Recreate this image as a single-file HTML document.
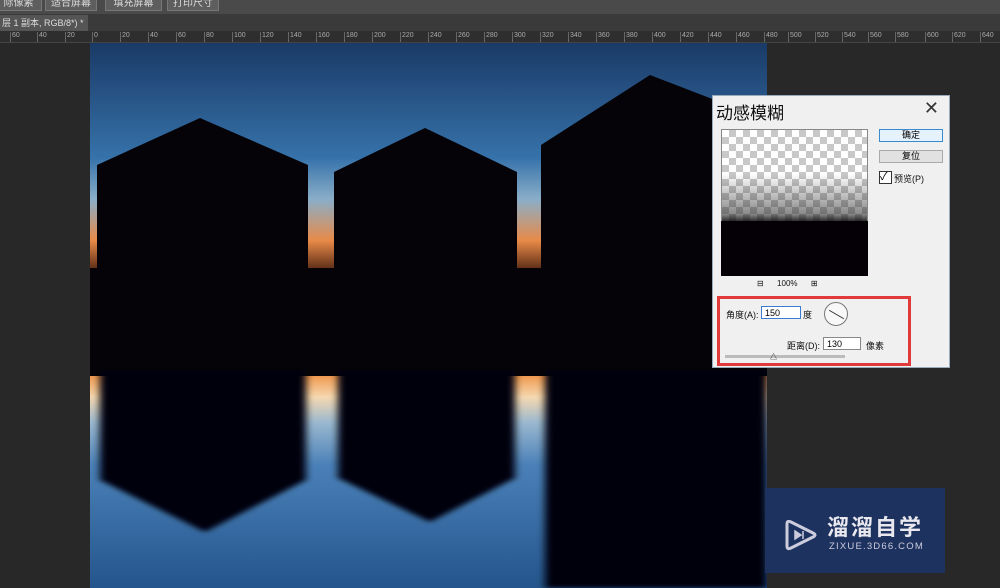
<!DOCTYPE html>
<html><head><meta charset="utf-8"><style>
*{margin:0;padding:0;box-sizing:border-box}
body{width:1000px;height:588px;overflow:hidden;background:#282828;font-family:"Liberation Sans","Noto Sans CJK SC",sans-serif;position:relative}
.top{position:absolute;left:0;top:0;width:1000px;height:14px;background:#4a4a4a}
.btn{position:absolute;top:-3px;height:14px;background:#5e5e5e;border:1px solid #777;color:#ddd;font-size:10px;line-height:12px;text-align:center}
.tabbar{position:absolute;top:14px;left:0;width:1000px;height:17px;background:#3a3a3a}
.tab{position:absolute;left:0;top:1px;width:88px;height:16px;background:#555;color:#ddd;font-size:9px;line-height:16px;padding-left:2px}
.ruler{position:absolute;top:31px;left:0;width:1000px;height:12px;background:#2e2e2e;color:#aaa;font-size:7px;border-bottom:1px solid #444}
.ruler span{position:absolute;top:1px;border-left:1px solid #666;padding-left:1px;height:10px}
.dlg{position:absolute;left:712px;top:95px;width:238px;height:273px;background:#f0f0f0;border:1px solid #9ab}
.title{position:absolute;left:3px;top:3px;font-size:17px;color:#111}
.x{position:absolute;right:10px;top:2px;font-size:18px;color:#333}
.prev{position:absolute;left:8px;top:33px;width:147px;height:147px;border:1px solid #888;
background:linear-gradient(rgba(255,255,255,0) 0,rgba(255,255,255,0) 30%,rgba(40,40,40,.55) 58%,rgba(0,0,0,.9) 64%),repeating-conic-gradient(#c8c8c8 0 25%,#fff 0 50%) 0 0/14px 14px}
.prev2{position:absolute;left:8px;top:125px;width:147px;height:55px;background:#050005}
.b{position:absolute;left:166px;width:64px;height:13px;border:1px solid #aaa;background:#e1e1e1;font-size:9px;text-align:center;line-height:11px}
.red{position:absolute;left:4px;top:200px;width:194px;height:70px;border:3px solid #e03a3a}
.inp{position:absolute;background:#fff;border:1px solid #3a7bd5;font-size:9px;padding-left:3px;line-height:12px;height:13px}
.s{position:absolute;font-size:9px;color:#111}
.logo{position:absolute;left:765px;top:488px;width:180px;height:85px;background:#1e3260}
</style></head><body>
<div class="top">
<div class="btn" style="left:-5px;width:47px">际像素</div>
<div class="btn" style="left:45px;width:52px">适合屏幕</div>
<div class="btn" style="left:105px;width:57px">填充屏幕</div>
<div class="btn" style="left:167px;width:52px">打印尺寸</div>
</div>
<div class="tabbar"><div class="tab">层 1 副本, RGB/8*) * &nbsp;×</div></div>
<div class="ruler">
<span style="left:10px">60</span><span style="left:37px">40</span><span style="left:65px">20</span><span style="left:92px">0</span><span style="left:120px">20</span><span style="left:148px">40</span><span style="left:176px">60</span><span style="left:204px">80</span><span style="left:232px">100</span><span style="left:260px">120</span><span style="left:288px">140</span><span style="left:316px">160</span><span style="left:344px">180</span><span style="left:372px">200</span><span style="left:400px">220</span><span style="left:428px">240</span><span style="left:456px">260</span><span style="left:484px">280</span><span style="left:512px">300</span><span style="left:540px">320</span><span style="left:568px">340</span><span style="left:596px">360</span><span style="left:624px">380</span><span style="left:652px">400</span><span style="left:680px">420</span><span style="left:708px">440</span><span style="left:736px">460</span><span style="left:764px">480</span><span style="left:788px">500</span><span style="left:815px">520</span><span style="left:842px">540</span><span style="left:868px">560</span><span style="left:895px">580</span><span style="left:925px">600</span><span style="left:952px">620</span><span style="left:980px">640</span>
</div>
<svg style="position:absolute;left:90px;top:43px" width="677" height="545" viewBox="90 43 677 545">
<defs>
<linearGradient id="sky" x1="0" y1="0" x2="0" y2="1">
<stop offset="0" stop-color="#1a3a66"/><stop offset="0.5" stop-color="#3672aa"/><stop offset="0.68" stop-color="#8aaec8"/><stop offset="0.86" stop-color="#e88a48"/><stop offset="1" stop-color="#4a2010"/></linearGradient>
<linearGradient id="ref" x1="0" y1="0" x2="0" y2="1">
<stop offset="0" stop-color="#f09a50"/><stop offset="0.1" stop-color="#f5d8b0"/><stop offset="0.22" stop-color="#9ab8d0"/><stop offset="0.42" stop-color="#4a80b8"/><stop offset="1" stop-color="#24558c"/></linearGradient>
<filter id="bl"><feGaussianBlur stdDeviation="4 2"/></filter>
</defs>
<rect x="90" y="43" width="677" height="230" fill="url(#sky)"/>
<rect x="90" y="268" width="677" height="110" fill="#050308"/>
<rect x="90" y="376" width="677" height="212" fill="url(#ref)"/>
<g fill="#050308">
<path d="M97 165 L200 118 L308 165 L308 280 L97 280Z"/>
<path d="M334 172 L425 128 L517 172 L517 280 L334 280Z"/>
<path d="M541 145 L650 75 L767 120 L767 280 L541 280Z"/>
</g>
<g fill="#050308" filter="url(#bl)">
<path d="M100 370 L306 370 L306 480 L205 532 L100 480Z"/>
<path d="M338 370 L515 370 L515 478 L430 522 L338 478Z"/>
<path d="M545 370 L767 370 L767 588 L545 588Z"/>
</g>
</svg>
<div class="dlg">
<div class="title">动感模糊</div><div class="x">✕</div>
<div class="prev"></div><div class="prev2"></div>
<div class="b" style="top:33px;border-color:#3a8ad0;background:#e5f1fb">确定</div>
<div class="b" style="top:54px">复位</div>
<div style="position:absolute;left:166px;top:75px;width:13px;height:13px;border:1px solid #333;background:#fff;font-size:11px;line-height:11px">✓</div>
<div class="s" style="left:181px;top:76px">预览(P)</div>
<div class="s" style="left:44px;top:183px;font-size:8px">⊟ &nbsp; &nbsp; &nbsp;100% &nbsp; &nbsp; &nbsp;⊞</div>
<div class="red"></div>
<div class="s" style="left:13px;top:212px">角度(A):</div>
<div class="inp" style="left:48px;top:210px;width:40px">150</div>
<div class="s" style="left:90px;top:212px">度</div>
<div style="position:absolute;left:111px;top:206px;width:24px;height:24px;border-radius:50%;border:1px solid #777;background:#f8f8f8"><div style="position:absolute;left:3px;top:11px;width:17px;height:1px;background:#333;transform:rotate(30deg)"></div></div>
<div class="s" style="left:74px;top:243px">距离(D):</div>
<div class="inp" style="left:110px;top:241px;width:38px;border-color:#888">130</div>
<div class="s" style="left:153px;top:243px">像素</div>
<div style="position:absolute;left:12px;top:259px;width:120px;height:3px;background:#bbb"></div>
<div style="position:absolute;left:57px;top:256px;font-size:7px">△</div>
</div>
<div class="logo">
<svg style="position:absolute;left:18px;top:30px" width="36" height="34" viewBox="0 0 36 34"><path d="M4 6 Q4 2 8 4 L30 15 Q34 17 30 19 L8 30 Q4 32 4 28Z" fill="none" stroke="#ccd" stroke-width="3"/><path d="M12 13 L18 17 L12 21Z M20 13 L20 21" fill="#ccd" stroke="#ccd" stroke-width="1.5"/></svg>
<div style="position:absolute;left:62px;top:22px;color:#e8e8ee;font-size:22px;font-weight:bold;letter-spacing:2px">溜溜自学</div>
<div style="position:absolute;left:64px;top:53px;color:#ccd;font-size:9.5px;letter-spacing:1.2px">ZIXUE.3D66.COM</div>
</div>
</body></html>
